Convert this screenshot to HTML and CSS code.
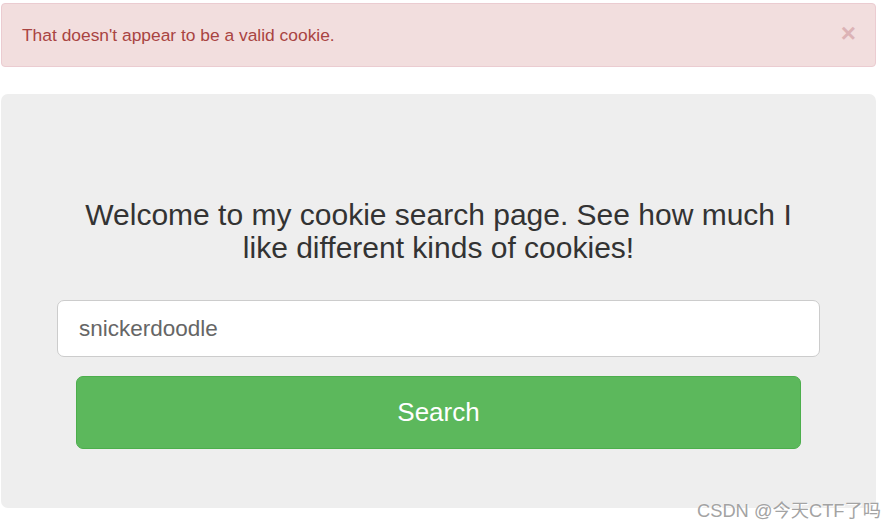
FILE: index.html
```html
<!DOCTYPE html>
<html lang="en">
<head>
<meta charset="utf-8">
<title>Cookie search</title>
<link rel="stylesheet" href="styles.css">
</head>
<body>
<div class="page">
  <div class="alert">
    <span class="alert-text">That doesn't appear to be a valid cookie.</span>
    <span class="close">&times;</span>
  </div>
  <div class="jumbotron">
    <h2 class="title">Welcome to my cookie search page. See how much I like different kinds of cookies!</h2>
    <div class="search-input">snickerdoodle</div>
    <div class="btn">Search</div>
  </div>
</div>
<div class="watermark">CSDN @今天CTF了吗</div>
</body>
</html>
```
FILE: styles.css
```css
html, body {
  margin: 0;
  padding: 0;
  background: #fff;
}
body {
  font-family: "Liberation Sans", Arial, sans-serif;
  color: #333;
  width: 896px;
  height: 528px;
  overflow: hidden;
  position: relative;
}
.page {
  padding: 3px 20px 0 1px;
  display: flex;
  flex-direction: column;
  gap: 27px;
}
.alert {
  box-sizing: border-box;
  height: 64px;
  background: #f2dede;
  border: 1px solid #ebccd1;
  border-radius: 4px;
  color: #a94442;
  display: flex;
  align-items: center;
  justify-content: space-between;
  padding: 0 19px 0 20px;
  font-size: 17.4px;
}
.alert-text {
  margin-top: 1px;
}
.close {
  font-size: 26px;
  font-weight: bold;
  color: #dcb3b6;
  line-height: 1;
  margin-top: -4px;
}
.jumbotron {
  box-sizing: border-box;
  height: 414px;
  background: #eee;
  border-radius: 7px;
  padding: 104px 56px 0 56px;
  display: flex;
  flex-direction: column;
}
.title {
  margin: 0;
  padding: 0 20px;
  font-weight: normal;
  font-size: 30px;
  line-height: 33px;
  text-align: center;
  color: #333;
}
.search-input {
  box-sizing: border-box;
  margin-top: 36px;
  height: 57px;
  background: #fff;
  border: 1px solid #ccc;
  border-radius: 7px;
  padding: 0 21px;
  display: flex;
  align-items: center;
  font-size: 22.5px;
  color: #666;
}
.btn {
  box-sizing: border-box;
  margin: 19px 19px 0;
  height: 73px;
  background: #5cb85c;
  border: 1px solid #4cae4c;
  border-radius: 7px;
  color: #fff;
  font-size: 26px;
  display: flex;
  align-items: center;
  justify-content: center;
}
.watermark {
  position: absolute;
  left: 697px;
  top: 496px;
  font-family: "Liberation Sans", "Noto Sans CJK SC", sans-serif;
  font-size: 18.3px;
  color: #a3a3a3;
  text-shadow: 0 0 1px #fff, 1px 1px 0 #fff;
  white-space: nowrap;
}
```
